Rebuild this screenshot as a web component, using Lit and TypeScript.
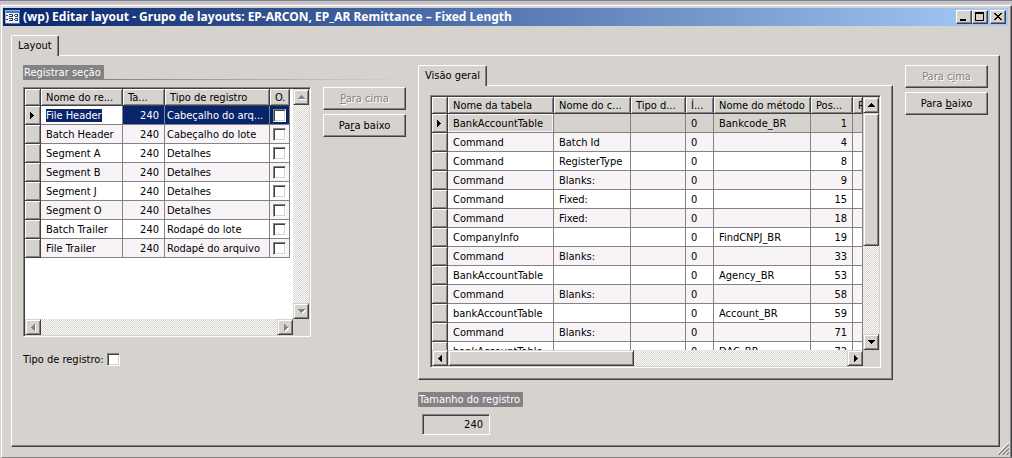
import { LitElement, html, css, svg } from "lit";
import { customElement, property } from "lit/decorators.js";
import { classMap } from "lit/directives/class-map.js";

const raised = css`
  border: 1px solid;
  border-color: #fff #424142 #424142 #fff;
  box-shadow: inset -1px -1px #848284;
`;

const base = css`
  * {
    box-sizing: border-box;
  }
  button {
    margin: 0;
    padding: 0;
    font: inherit;
    color: #000;
    background: #d6d3ce;
    border-radius: 0;
    ${raised}
  }
  input[type="checkbox"] {
    appearance: none;
    display: block;
    width: 13px;
    height: 13px;
    margin: 0;
    background: #fff;
    border: 1px solid;
    border-color: #848284 #fff #fff #848284;
    box-shadow: inset 1px 1px #424142, inset -1px -1px #d6d3ce;
  }
`;

const arrows: Record<string, string> = {
  up: "M7 5h1v1h1v1h1v1h1v1H4V8h1V7h1V6h1z",
  down: "M4 5h7v1h-1v1H9v1H8v1H7V8H6V7H5V6H4z",
  left: "M8 4h1v7H8v-1H7V9H6V8H5V7h1V6h1V5h1z",
  right: "M6 4h1v1h1v1h1v1h1v1H9v1H8v1H7v1H6z",
};

const arrow = (dir: string, off: boolean) => html`
  <svg width="15" height="15" viewBox="0 0 15 15" shape-rendering="crispEdges" aria-hidden="true">
    ${off ? svg`<path d=${arrows[dir]} fill="#fff" transform="translate(1 1)" />` : ""}
    <path d=${arrows[dir]} fill=${off ? "#848284" : "#000"} />
  </svg>
`;

@customElement("scroll-bar")
export class ScrollBar extends LitElement {
  @property() axis: "x" | "y" = "y";
  @property({ type: Number }) thumb = 0;

  static styles = [
    base,
    css`
      :host {
        display: block;
      }
      .bar {
        display: flex;
        width: 100%;
        height: 100%;
        background: repeating-conic-gradient(#d6d3ce 0 25%, #fff 0 50%) 0 0 / 2px 2px;
      }
      .y {
        flex-direction: column;
      }
      button {
        flex: none;
        width: 16px;
        height: 16px;
        border-color: #d6d3ce #424142 #424142 #d6d3ce;
        box-shadow: inset 1px 1px #fff, inset -1px -1px #848284;
      }
      svg {
        display: block;
      }
      .track {
        flex: 1;
        min-width: 0;
        min-height: 0;
      }
      .thumb {
        background: #d6d3ce;
        border: 1px solid;
        border-color: #d6d3ce #424142 #424142 #d6d3ce;
        box-shadow: inset 1px 1px #fff, inset -1px -1px #848284;
        width: 100%;
        height: 100%;
      }
    `,
  ];

  render() {
    const y = this.axis === "y";
    const off = !this.thumb;
    const size = `${y ? "height" : "width"}:${this.thumb}%`;
    return html`
      <div class="bar ${this.axis}">
        <button ?disabled=${off} aria-label=${y ? "Acima" : "Esquerda"}>${arrow(y ? "up" : "left", off)}</button>
        <div class="track">${off ? "" : html`<div class="thumb" style=${size}></div>`}</div>
        <button ?disabled=${off} aria-label=${y ? "Abaixo" : "Direita"}>${arrow(y ? "down" : "right", off)}</button>
      </div>
    `;
  }
}

interface Column {
  label: string;
  width?: number;
  kind?: "num" | "check" | "tight";
}

@customElement("data-grid")
export class DataGrid extends LitElement {
  @property({ attribute: false }) columns: Column[] = [];
  @property({ attribute: false }) rows: string[][] = [];
  @property({ type: Boolean }) editing = false;
  @property({ type: Number }) thumbX = 0;
  @property({ type: Number }) thumbY = 0;

  static styles = [
    base,
    css`
      :host {
        display: grid;
        grid-template: minmax(0, 1fr) 16px / minmax(0, 1fr) 16px;
        border: 1px solid;
        border-color: #848284 #fff #fff #848284;
        padding: 1px;
        background: #d6d3ce;
        box-shadow: inset 1px 1px #424142;
      }
      .view {
        overflow: hidden;
        background: #fff;
      }
      table {
        table-layout: fixed;
        border-collapse: separate;
        border-spacing: 0;
      }
      .fill {
        width: 100%;
      }
      .fixed {
        width: 1px;
      }
      th,
      td {
        height: 19px;
        padding: 2px 5px 0;
        border-right: 1px solid #848284;
        border-bottom: 1px solid #848284;
        font-weight: normal;
        text-align: left;
        line-height: 16px;
        white-space: nowrap;
        overflow: hidden;
      }
      thead th {
        height: 17px;
        line-height: 14px;
        padding: 2px 0 0 5px;
        background: #d6d3ce;
        border-color: #424142;
        box-shadow: inset 1px 1px #fff, inset -1px -1px #848284;
      }
      tbody th {
        padding: 0;
        background: #d6d3ce;
        border-color: #424142;
        box-shadow: inset 1px 1px #fff, inset -1px -1px #848284;
      }
      tbody th svg {
        display: block;
      }
      tbody tr:nth-child(even) td {
        background: #f7f3f7;
      }
      td.num {
        text-align: right;
      }
      td.tight {
        padding: 2px 2px 0;
      }
      td.check {
        padding: 0 3px;
      }
      .current td {
        background: #d6d3ce;
      }
      .current td:nth-child(2) {
        box-shadow: inset 0 0 0 1px #f7f3f7;
      }
      .editing .current td {
        background: #08246b;
        color: #fff;
      }
      .editing .current td:nth-child(2) {
        background: #fff;
        box-shadow: none;
      }
      mark {
        background: #08246b;
        color: #fff;
      }
    `,
  ];

  render() {
    const stretch = this.columns.some((c) => !c.width);
    return html`
      <div class="view">
        <table class=${classMap({ editing: this.editing, fill: stretch, fixed: !stretch })}>
          <colgroup>
            <col width="16" />
            ${this.columns.map((c) => (c.width ? html`<col width=${c.width} />` : html`<col />`))}
          </colgroup>
          <thead>
            <tr>
              <th></th>
              ${this.columns.map((c) => html`<th scope="col" class=${c.kind ?? ""}>${c.label}</th>`)}
            </tr>
          </thead>
          <tbody>
            ${this.rows.map(
              (row, i) => html`
                <tr class=${i === 0 ? "current" : ""}>
                  <th>
                    ${i === 0
                      ? html`<svg width="15" height="15" viewBox="0 0 15 15" shape-rendering="crispEdges">
                          <path d="M5 4h1v1h1v1h1v1h1v1H8v1H7v1H6v1H5z" />
                        </svg>`
                      : ""}
                  </th>
                  ${this.columns.map((c, j) => this.cell(c, row, i, j))}
                </tr>
              `
            )}
          </tbody>
        </table>
      </div>
      <scroll-bar axis="y" .thumb=${this.thumbY}></scroll-bar>
      <scroll-bar axis="x" .thumb=${this.thumbX}></scroll-bar>
    `;
  }

  private cell(c: Column, row: string[], i: number, j: number) {
    if (c.kind === "check") {
      return html`<td class="check"><input type="checkbox" aria-label="Opcional: ${row[0]}" /></td>`;
    }
    const text = row[j] ?? "";
    const marked = this.editing && i === 0 && j === 0;
    return html`<td class=${c.kind ?? ""}>${marked ? html`<mark>${text}</mark>` : text}</td>`;
  }
}

const sectionColumns: Column[] = [
  { label: "Nome do re...", width: 82 },
  { label: "Ta...", width: 42, kind: "num" },
  { label: "Tipo de registro", width: 105, kind: "tight" },
  { label: "O.", width: 20, kind: "check" },
];

const sections = [
  ["File Header", "240", "Cabeçalho do arq..."],
  ["Batch Header", "240", "Cabeçalho do lote"],
  ["Segment A", "240", "Detalhes"],
  ["Segment B", "240", "Detalhes"],
  ["Segment J", "240", "Detalhes"],
  ["Segment O", "240", "Detalhes"],
  ["Batch Trailer", "240", "Rodapé do lote"],
  ["File Trailer", "240", "Rodapé do arquivo"],
];

const fieldColumns: Column[] = [
  { label: "Nome da tabela", width: 106 },
  { label: "Nome do c...", width: 77 },
  { label: "Tipo d...", width: 55 },
  { label: "Í...", width: 28 },
  { label: "Nome do método", width: 97 },
  { label: "Pos...", width: 42, kind: "num" },
  { label: "P" },
];

const fields = [
  ["BankAccountTable", "", "", "0", "Bankcode_BR", "1"],
  ["Command", "Batch Id", "", "0", "", "4"],
  ["Command", "RegisterType", "", "0", "", "8"],
  ["Command", "Blanks:", "", "0", "", "9"],
  ["Command", "Fixed:", "", "0", "", "15"],
  ["Command", "Fixed:", "", "0", "", "18"],
  ["CompanyInfo", "", "", "0", "FindCNPJ_BR", "19"],
  ["Command", "Blanks:", "", "0", "", "33"],
  ["BankAccountTable", "", "", "0", "Agency_BR", "53"],
  ["Command", "Blanks:", "", "0", "", "58"],
  ["bankAccountTable", "", "", "0", "Account_BR", "59"],
  ["Command", "Blanks:", "", "0", "", "71"],
  ["bankAccountTable", "", "", "0", "DAC_BR", "72"],
];

@customElement("app-root")
export class AppRoot extends LitElement {
  static styles = [
    base,
    css`
      :host {
        display: flex;
        flex-direction: column;
        box-sizing: border-box;
        min-height: 100vh;
        font: 11px/14px "DejaVu Sans Condensed", "DejaVu Sans", sans-serif;
        color: #000;
        background: #d6d3ce;
        border-top: 1px solid #848284;
      }
      .backdrop {
        height: 3px;
        background: #c6c3ce;
      }
      .window {
        flex: 1;
        display: flex;
        flex-direction: column;
        margin-left: 1px;
        padding: 2px 3px 2px 1px;
        border: 1px solid;
        border-color: #fff #424142 #848284 #fff;
        box-shadow: inset -1px 0 #848284;
        margin-top: 1px;
        position: relative;
      }
      .titlebar {
        display: flex;
        align-items: center;
        height: 18px;
        padding: 0 2px;
        color: #fff;
        background: linear-gradient(90deg, #08246b, #a5cbf7);
      }
      h1 {
        flex: 1;
        margin: 0 0 0 3px;
        font-family: "Noto Sans", sans-serif;
        font-size: 12px;
        line-height: 18px;
        white-space: nowrap;
      }
      .titlebar svg {
        display: block;
      }
      .titlebar button {
        width: 16px;
        height: 14px;
      }
      .titlebar .close {
        margin-left: 2px;
      }
      .body {
        flex: 1;
        display: flex;
        flex-direction: column;
        padding: 9px 8px 8px 8px;
      }
      .tab {
        align-self: flex-start;
        height: 21px;
        padding: 3px 6px 0 6px;
        margin-bottom: -1px;
        position: relative;
        background: #d6d3ce;
        border: 1px solid;
        border-color: #fff #424142 transparent #fff;
        border-bottom: 0;
        border-radius: 2px 2px 0 0;
        box-shadow: inset -1px 0 #848284;
        line-height: 14px;
      }
      .sheet {
        border: 1px solid;
        border-color: #fff #424142 #424142 #fff;
        box-shadow: inset -1px -1px #848284;
      }
      .main {
        flex: 1;
        display: flex;
        align-items: flex-start;
        gap: 12px;
        padding: 9px 11px 10px 11px;
      }
      .left {
        display: flex;
        flex-direction: column;
      }
      .heading {
        display: flex;
        align-items: flex-end;
        margin-bottom: 7px;
      }
      .heading::after {
        content: "";
        flex: 1;
        height: 1px;
        background: linear-gradient(90deg, #848284, #d6d3ce);
      }
      h2 {
        margin: 0;
        padding: 1px 3px 0 1px;
        height: 15px;
        font-size: 11px;
        line-height: 14px;
        font-weight: normal;
        color: #fff;
        background: #848284;
        border-radius: 1px;
      }
      .pair {
        display: flex;
        gap: 12px;
      }
      .sections {
        width: 288px;
        height: 250px;
      }
      .buttons {
        flex: none;
        display: flex;
        flex-direction: column;
        gap: 4px;
        width: 83px;
      }
      .buttons button {
        height: 23px;
      }
      button:disabled {
        color: #848284;
        text-shadow: 1px 1px #fff;
      }
      .option {
        display: flex;
        align-items: flex-start;
        gap: 3px;
        margin-top: 16px;
      }
      .right {
        flex: 1;
        min-width: 0;
        display: flex;
        flex-direction: column;
      }
      .overview {
        padding: 9px 11px 11px 11px;
      }
      .fields {
        height: 273px;
      }
      .size {
        display: flex;
        flex-direction: column;
        align-items: flex-start;
        gap: 7px;
        margin-top: 12px;
      }
      .size input {
        width: 68px;
        height: 21px;
        margin: 0 4px;
        padding: 0 6px;
        font: inherit;
        text-align: right;
        color: #000;
        background: #d6d3ce;
        border: 1px solid;
        border-color: #848284 #fff #fff #848284;
        border-radius: 0;
        box-shadow: inset 1px 1px #424142;
      }
      .grip {
        position: absolute;
        right: 2px;
        bottom: 2px;
      }
    `,
  ];

  render() {
    return html`
      <div class="backdrop"></div>
      <div class="window">
        <header class="titlebar">
          <svg width="15" height="14" viewBox="0 0 15 14" shape-rendering="crispEdges" aria-hidden="true">
            <path fill="#4a75bd" d="M0 0h15v14H0z" />
            <path fill="#8cb2e7" d="M0 0h15v1H0zM0 1h1v12H0z" />
            <path fill="#eff3f7" d="M1 3h13v10H1z" />
            <path
              fill="#31415a"
              d="M1 5h2v1H1zM1 9h2v1H1zM4 4h4v1H4zM4 6h4v1H4zM7 5h1v1H7zM4 8h4v1H4zM4 10h4v1H4zM7 9h1v1H7zM9 5h1v1H9zM9 9h1v1H9zM10 4h3v1h-3zM10 6h3v1h-3zM12 5h1v1h-1zM10 8h3v1h-3zM10 10h3v1h-3zM12 9h1v1h-1z"
            />
          </svg>
          <h1>(wp) Editar layout - Grupo de layouts: EP-ARCON, EP_AR Remittance – Fixed Length</h1>
          <button aria-label="Minimizar">
            <svg width="14" height="12" viewBox="0 0 14 12" shape-rendering="crispEdges"><path d="M3 8h6v2H3z" /></svg>
          </button>
          <button aria-label="Maximizar">
            <svg width="14" height="12" viewBox="0 0 14 12" shape-rendering="crispEdges">
              <path fill-rule="evenodd" d="M2 1h9v9H2zM3 3v6h7V3z" />
            </svg>
          </button>
          <button class="close" aria-label="Fechar">
            <svg width="14" height="12" viewBox="0 0 14 12" shape-rendering="crispEdges">
              <path d="M3 2h2v1h1v1h2V3h1V2h2v1h-1v1H9v1H8v1h1v1h1v1h1v1H9V8H8V7H6v1H5v1H3V8h1V7h1V6h1V5H5V4H4V3H3z" />
            </svg>
          </button>
        </header>
        <div class="body">
          <div class="tab">Layout</div>
          <main class="sheet main">
            <section class="left">
              <div class="heading"><h2>Registrar seção</h2></div>
              <div class="pair">
                <data-grid class="sections" editing .columns=${sectionColumns} .rows=${sections}></data-grid>
                <div class="buttons">
                  <button disabled><u>P</u>ara cima</button>
                  <button>Pa<u>r</u>a baixo</button>
                </div>
              </div>
              <div class="option">
                <label for="type">Tipo de registro:</label>
                <input id="type" type="checkbox" />
              </div>
            </section>
            <section class="right">
              <div class="tab">Visão geral</div>
              <div class="sheet overview">
                <data-grid
                  class="fields"
                  .columns=${fieldColumns}
                  .rows=${fields}
                  .thumbX=${46.5}
                  .thumbY=${60}
                ></data-grid>
              </div>
              <div class="size">
                <h2><label for="size">Tamanho do registro</label></h2>
                <input id="size" type="text" readonly value="240" />
              </div>
            </section>
            <div class="buttons">
              <button disabled>Para c<u>i</u>ma</button>
              <button>Para <u>b</u>aixo</button>
            </div>
          </main>
        </div>
        <svg class="grip" width="12" height="12" viewBox="0 0 12 12" aria-hidden="true">
          <path stroke="#fff" d="M0 11.5L11.5 0M4 11.5L11.5 4M8 11.5L11.5 8" />
          <path stroke="#848284" stroke-width="1.5" d="M1.5 12L12 1.5M5.5 12L12 5.5M9.5 12L12 9.5" />
        </svg>
      </div>
    `;
  }
}
